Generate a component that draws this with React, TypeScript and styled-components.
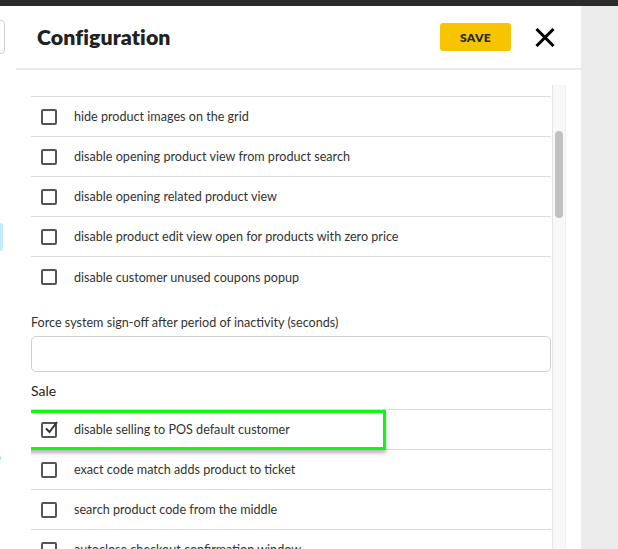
import styled, { createGlobalStyle } from "styled-components";

const GlobalStyle = createGlobalStyle`
  html, body {
    margin: 0;
    padding: 0;
    overflow: hidden;
  }
  body {
    font-family: Lato, "Open Sans", sans-serif;
    color: #333;
  }
`;

const Page = styled.div`
  height: 100vh;
  display: flex;
  flex-direction: column;
  background: #fff;
`;

const TopBar = styled.div`
  height: 6px;
  background: #2b2b2b;
  flex-shrink: 0;
`;

const Main = styled.div`
  flex: 1;
  display: flex;
  min-height: 0;
`;

const BackStrip = styled.div`
  width: 16px;
  flex-shrink: 0;
  overflow: hidden;
  position: relative;
  display: flex;
  flex-direction: column;
`;

const BackInput = styled.div`
  margin-top: 14px;
  margin-left: -30px;
  width: 33px;
  height: 32px;
  border: 1px solid #d0d0d0;
  border-radius: 4px;
`;

const BackTab = styled.div`
  margin-top: 169px;
  width: 3px;
  height: 28px;
  background: #c4ebfa;
  border-radius: 0 3px 3px 0;
`;

const BackText = styled.div`
  margin-top: 198px;
  margin-left: -8px;
  font-size: 15px;
  font-weight: 700;
  color: #111;
  line-height: 15px;
`;

const Panel = styled.div`
  width: 565px;
  flex-shrink: 0;
  display: flex;
  flex-direction: column;
  background: #fff;
`;

const Header = styled.div`
  height: 62px;
  flex-shrink: 0;
  display: flex;
  align-items: center;
  padding: 0 26px 0 21px;
  border-bottom: 2px solid #e9e9e9;
`;

const Title = styled.h1`
  margin: 0;
  flex: 1;
  font-size: 21.3px;
  font-weight: 800;
  color: #222;
  letter-spacing: 0.1px;
`;

const SaveButton = styled.button`
  width: 71px;
  height: 28px;
  border: none;
  border-radius: 3px;
  background: #f8c400;
  color: #2a2a2a;
  font-family: inherit;
  font-size: 12px;
  font-weight: 800;
  letter-spacing: 0.3px;
  margin-right: 24px;
  padding: 0;
`;

const CloseButton = styled.button`
  border: none;
  background: none;
  padding: 0;
  width: 20px;
  height: 20px;
  display: flex;
  align-items: center;
  justify-content: center;
`;

const Body = styled.div`
  flex: 1;
  display: flex;
  padding: 15px 15px 0 15px;
  min-height: 0;
`;

const Content = styled.div`
  width: 520px;
  flex-shrink: 0;
  padding-top: 11px;
  overflow: hidden;
`;

const List = styled.div`
  border-top: 1px solid #dcdcdc;
`;

const Row = styled.div<{ $last?: boolean }>`
  position: relative;
  height: 40px;
  display: flex;
  align-items: center;
  padding-left: 10px;
  box-sizing: border-box;
  border-bottom: ${(p) => (p.$last ? "none" : "1px solid #dcdcdc")};
`;

const Box = styled.div`
  width: 16px;
  height: 16px;
  box-sizing: border-box;
  border: 2px solid #555;
  border-radius: 2px;
  margin-right: 17px;
  position: relative;
  flex-shrink: 0;
`;

const Check = styled.svg`
  position: absolute;
  left: 1px;
  top: -4px;
`;

const RowText = styled.span`
  font-size: 12.6px;
  color: #333;
`;

const FieldLabel = styled.div`
  margin-top: 18px;
  font-size: 12.6px;
  color: #333;
  line-height: 16px;
`;

const Input = styled.input`
  display: block;
  width: 100%;
  box-sizing: border-box;
  height: 36px;
  margin-top: 5px;
  border: 1px solid #cfcfcf;
  border-radius: 5px;
  outline: none;
`;

const SectionTitle = styled.div`
  margin-top: 11px;
  height: 26px;
  line-height: 16px;
  font-size: 14px;
  color: #222;
`;

const Highlight = styled.div`
  position: absolute;
  left: -3px;
  top: 0;
  width: 358px;
  height: 40px;
  box-sizing: border-box;
  border: 3px solid #14f514;
  box-shadow: 0 3px 4px rgba(0, 0, 0, 0.3);
  pointer-events: none;
`;

const Track = styled.div`
  width: 14px;
  margin-left: 1px;
  flex-shrink: 0;
  box-sizing: border-box;
  background: #f8f8f8;
  border-left: 1px solid #e4e4e4;
  border-right: 1px solid #eeeeee;
  padding-top: 46px;
  display: flex;
  justify-content: center;
`;

const Thumb = styled.div`
  width: 8px;
  height: 87px;
  border-radius: 4px;
  background: #c1c1c1;
`;

const Gutter = styled.div`
  flex: 1;
  background: #ececec;
`;

const generalOptions = [
  "hide product images on the grid",
  "disable opening product view from product search",
  "disable opening related product view",
  "disable product edit view open for products with zero price",
  "disable customer unused coupons popup",
];

const saleOptions = [
  { label: "disable selling to POS default customer", checked: true },
  { label: "exact code match adds product to ticket", checked: false },
  { label: "search product code from the middle", checked: false },
  { label: "autoclose checkout confirmation window", checked: false },
];

function Checkbox({ checked }: { checked?: boolean }) {
  return (
    <Box>
      {checked && (
        <Check width="16" height="16" viewBox="0 0 16 16">
          <path d="M2 8.5 L5.5 12 L13 2" fill="none" stroke="#333" strokeWidth="2" />
        </Check>
      )}
    </Box>
  );
}

function App() {
  return (
    <Page>
      <GlobalStyle />
      <TopBar />
      <Main>
        <BackStrip>
          <BackInput />
          <BackTab />
          <BackText>o</BackText>
        </BackStrip>
        <Panel>
          <Header>
            <Title>Configuration</Title>
            <SaveButton>SAVE</SaveButton>
            <CloseButton>
              <svg width="20" height="19" viewBox="0 0 20 19">
                <path d="M1.5 1 L18.5 18 M18.5 1 L1.5 18" stroke="#000" strokeWidth="3" />
              </svg>
            </CloseButton>
          </Header>
          <Body>
            <Content>
              <List>
                {generalOptions.map((o, i) => (
                  <Row key={o} $last={i === generalOptions.length - 1}>
                    <Checkbox />
                    <RowText>{o}</RowText>
                  </Row>
                ))}
              </List>
              <FieldLabel>Force system sign-off after period of inactivity (seconds)</FieldLabel>
              <Input />
              <SectionTitle>Sale</SectionTitle>
              <List>
                {saleOptions.map((o, i) => (
                  <Row key={o.label}>
                    <Checkbox checked={o.checked} />
                    <RowText>{o.label}</RowText>
                    {i === 0 && <Highlight />}
                  </Row>
                ))}
              </List>
            </Content>
            <Track>
              <Thumb />
            </Track>
          </Body>
        </Panel>
        <Gutter />
      </Main>
    </Page>
  );
}

export default App;
